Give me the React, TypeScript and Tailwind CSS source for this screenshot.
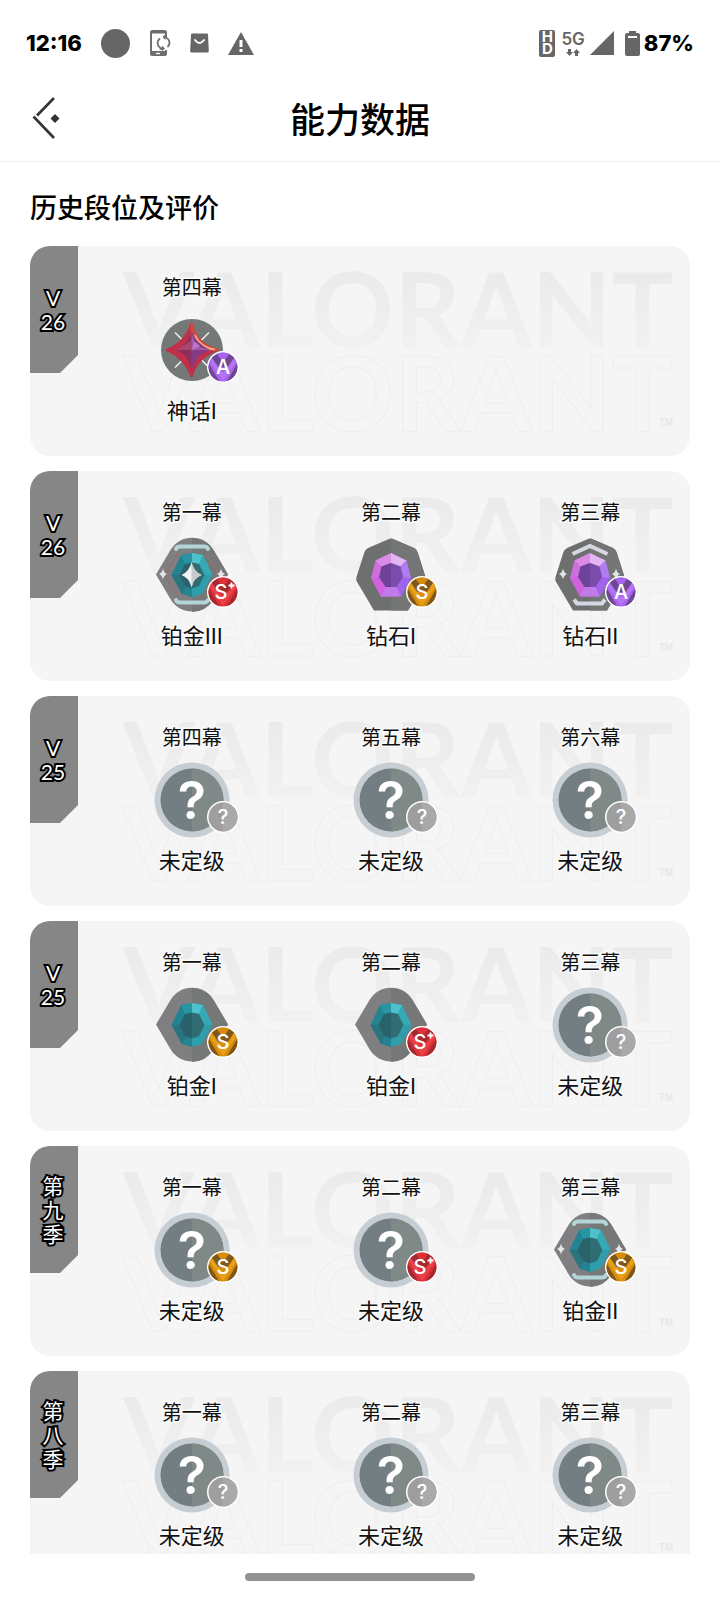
import type { ReactNode } from "react";

type Rank = "unranked" | "plat1" | "plat2" | "plat3" | "dia1" | "dia2" | "immortal";
type Grade = "A" | "S" | "S+" | "?";

interface Act {
  act: string;
  rank: Rank;
  grade: Grade;
}

interface Season {
  id: string;
  label: string[];
  acts: Act[];
}

const RANK_NAMES: Record<Rank, [string, string]> = {
  unranked: ["未定级", ""],
  plat1: ["铂金", "I"],
  plat2: ["铂金", "II"],
  plat3: ["铂金", "III"],
  dia1: ["钻石", "I"],
  dia2: ["钻石", "II"],
  immortal: ["神话", "I"],
};

const SEASONS: Season[] = [
  {
    id: "v26-2",
    label: ["V", "26"],
    acts: [{ act: "第四幕", rank: "immortal", grade: "A" }],
  },
  {
    id: "v26-1",
    label: ["V", "26"],
    acts: [
      { act: "第一幕", rank: "plat3", grade: "S+" },
      { act: "第二幕", rank: "dia1", grade: "S" },
      { act: "第三幕", rank: "dia2", grade: "A" },
    ],
  },
  {
    id: "v25-2",
    label: ["V", "25"],
    acts: [
      { act: "第四幕", rank: "unranked", grade: "?" },
      { act: "第五幕", rank: "unranked", grade: "?" },
      { act: "第六幕", rank: "unranked", grade: "?" },
    ],
  },
  {
    id: "v25-1",
    label: ["V", "25"],
    acts: [
      { act: "第一幕", rank: "plat1", grade: "S" },
      { act: "第二幕", rank: "plat1", grade: "S+" },
      { act: "第三幕", rank: "unranked", grade: "?" },
    ],
  },
  {
    id: "s9",
    label: ["第", "九", "季"],
    acts: [
      { act: "第一幕", rank: "unranked", grade: "S" },
      { act: "第二幕", rank: "unranked", grade: "S+" },
      { act: "第三幕", rank: "plat2", grade: "S" },
    ],
  },
  {
    id: "s8",
    label: ["第", "八", "季"],
    acts: [
      { act: "第一幕", rank: "unranked", grade: "?" },
      { act: "第二幕", rank: "unranked", grade: "?" },
      { act: "第三幕", rank: "unranked", grade: "?" },
    ],
  },
];

const GRADE_COLORS: Record<Grade, { base: string; dark: string; light: string }> = {
  A: { base: "#a763ee", dark: "#6d478f", light: "#bb7cf8" },
  S: { base: "#d88c0c", dark: "#7d571b", light: "#f0a81c" },
  "S+": { base: "#dd3038", dark: "#a52a30", light: "#f04a50" },
  "?": { base: "#9e9e9e", dark: "#9e9e9e", light: "#a9a9a9" },
};

function GradeBadge({ grade }: { grade: Grade }) {
  const c = GRADE_COLORS[grade];
  return (
    <svg viewBox="0 0 32 32" className="absolute top-[39px] left-[53px] size-8">
      <circle cx="16" cy="16" r="16" fill="#fff" />
      <circle cx="16" cy="16" r="14.500" fill={c.base} />
      {grade !== "?" && (
        <>
          <path d="M3.500 9l12.500 19-3 2.200A14.500 14.500 0 0 1 3.500 9Z" fill={c.base} />
          <path d="M2 13l10 17A14.500 14.500 0 0 1 2 13ZM30 13L20 30A14.500 14.500 0 0 0 30 13Z" fill={c.dark} />
          <path d="M5 6.500L10 3l6 8 6-8 5 3.500-5 9.500H10Z" fill={c.dark} />
          <path d="M10 3q6-3 12 0l-6 8Z" fill={c.base} />
          <path d="M5 7l11 15L27 7l2 4-13 19L3 11Z" fill={c.light} opacity="0.7" />
        </>
      )}
      {grade === "?" && <path d="M16 1.500a14.500 14.500 0 0 1 0 29Z" fill={c.light} />}
      <text
        x={grade === "S+" ? 14 : 16}
        y="23"
        textAnchor="middle"
        fill="#fff"
        className="font-[Inter,sans-serif] text-[20px] font-medium"
      >
        {grade === "S+" ? "S" : grade}
      </text>
      {grade === "S+" && <path d="M24.500 6.500v6M21.500 9.500h6" stroke="#fff" strokeWidth="1.800" />}
    </svg>
  );
}

function Sparkle({ cx, cy }: { cx: number; cy: number }) {
  return (
    <path
      transform={`translate(${cx} ${cy})`}
      d="M0-5.500Q1-1 4 0 1 1 0 5.500-1 1-4 0-1-1 0-5.500Z"
      fill="#e4e6ea"
    />
  );
}

function Unranked() {
  return (
    <>
      <circle cx="38" cy="38" r="37.500" fill="#c6cdd3" />
      <circle cx="38" cy="38" r="31.500" fill="#737e82" />
      <path d="M38 6.500a31.500 31.500 0 0 1 0 63Z" fill="#7f8987" />
      <text
        x="38"
        y="57"
        textAnchor="middle"
        fill="#fff"
        className="font-[Inter,sans-serif] text-[52px] font-semibold"
      >
        ?
      </text>
    </>
  );
}

function Platinum({ tier }: { tier: 1 | 2 | 3 }) {
  return (
    <>
      <path
        d="M2 37.500L16.500 13A25 25 0 0 1 59.500 13L74 37.500 59 63A25 25 0 0 1 17 63Z"
        fill="#7f7e80"
      />
      <path d="M38 1A25 25 0 0 1 59.500 13L74 37.500 59 63A25 25 0 0 1 38 75Z" fill="#767877" />
      {tier > 1 && (
        <path
          d="M22 12q1-2.500 4-2.500h24q3 0 4 2.500M22 63q1 2.500 4 2.500h24q3 0 4-2.500"
          fill="none"
          stroke="#b4d5d8"
          strokeWidth="4"
          strokeLinecap="round"
        />
      )}
      {tier === 3 && (
        <path
          d="M24 16L11 37.500 24 59M52 16l13 21.500L52 59"
          fill="none"
          stroke="#8d7571"
          strokeWidth="1.500"
        />
      )}
      {tier > 1 && (
        <>
          <Sparkle cx={9} cy={37} />
          <Sparkle cx={67} cy={37} />
        </>
      )}
      <path d="M17.500 38L27 18l11-2v44l-10-3Z" fill="#238390" />
      <path d="M58.500 38L49 18l-11-2v44l10-3Z" fill="#2f9dab" />
      <path d="M27 18l11-2v10l-7 1Z" fill="#2a95a2" />
      <path d="M38 16l11 2-4 9-7-1Z" fill="#4fc1ca" />
      <path d="M49 18l9.500 20H50l-5-11Z" fill="#35a9b6" />
      <path d="M17.500 38H26l6 11-4 8Z" fill="#2a7480" />
      <path d="M25.500 38L31 27l7-1.500v26L31 49Z" fill="#2a626b" />
      <path d="M50.500 38L45 27l-7-1.500v26l7-2.500Z" fill="#2f6d72" />
      {tier === 3 && (
        <>
          <path d="M37.500 25q2 9.500 10 13-8 3-10 12.500-2-9.500-10-12.500 8-3.500 10-13Z" fill="#f2f2f4" />
          <path d="M37.500 25q2 9.500 10 13-8 3-10 12.500Z" fill="#c9c9cf" />
        </>
      )}
    </>
  );
}

function Diamond({ tier }: { tier: 1 | 2 }) {
  return (
    <>
      <path
        d="M36.500 1.800L15 11q-3 1.500-3.700 4.500L3.500 40q-.8 2.500.6 5L21 73.500h34L71.900 45q1.400-2.500.6-5l-7.800-24.500Q64 12.500 61 11L39.500 1.800q-1.500-.6-3 0Z"
        fill="#6e706f"
      />
      <path d="M38 1.400l1.500.4L61 11q3 1.500 3.700 4.500L72.500 40q.8 2.500-.6 5L55 73.500H38Z" fill="#747675" />
      {tier === 2 && (
        <>
          <path
            d="M20.500 17L38 9l17.500 8M22 62.500l3 4h25l3-4"
            fill="none"
            stroke="#d7d7e4"
            strokeWidth="4"
          />
          <Sparkle cx={11} cy={37} />
          <Sparkle cx={64} cy={37} />
        </>
      )}
      <path d="M38 16L22.500 23.500 18 41l10 18.500h10Z" fill="#cf6fdd" />
      <path d="M38 16l15.500 7.500L58 41 48 59.500H38Z" fill="#a263ec" />
      <path d="M38 16l-15.500 7.500 6 6L38 26Z" fill="#d98be6" />
      <path d="M38 16l15.500 7.500-6 6L38 26Z" fill="#e3b6f3" />
      <path d="M53.500 23.500L58 41l-8-1-2.500-10.500Z" fill="#b07cf0" />
      <path d="M18 41l8-1 6.500 10-4.500 9.500Z" fill="#d161dc" />
      <path d="M28 59.500l4.500-9.500h11l4.500 9.500Z" fill="#c07ae9" />
      <path d="M38 26l-9.500 3.500L26 40l6.500 10H38Z" fill="#6d4399" />
      <path d="M38 26l9.500 3.500L50 40l-6.500 10H38Z" fill="#7c4cab" />
    </>
  );
}

function Immortal() {
  return (
    <>
      <circle cx="38" cy="38" r="31" fill="#747877" />
      <path
        d="M21 20.500l9 9M55 20.500l-9 9M21 55.500l9-9M55 55.500l-9-9"
        stroke="#f0eef0"
        strokeWidth="1.500"
      />
      <path
        d="M37.500 11.500Q42 32 63.500 38 43 45 37.500 64.500 31 46 12.500 38 31 31 37.500 11.500Z"
        fill="#c22f48"
        stroke="#c22f48"
        strokeWidth="2"
        strokeLinejoin="round"
      />
      <path d="M37.500 11.500Q42 32 63.500 38H37.500Z" fill="#d4483f" stroke="#d4483f" strokeWidth="2" strokeLinejoin="round" />
      <path d="M41 23q5 12 20 14.500-12-.5-17-5Z" fill="#f2aa7e" stroke="#f2aa7e" strokeWidth="1.500" />
      <path d="M37.500 19q-3 13-15.500 19 13 5 15.500 21Z" fill="#8c2f5c" />
      <path d="M37.500 28l-5.500 4-10 6h15.500Z" fill="#a8466f" />
      <path d="M37.500 19q4 12 18.500 19-15 5-18.500 21Z" fill="#853a85" />
      <path d="M37.500 20l3 10 6 5 9 3h-18Z" fill="#a558aa" />
      <path d="M40 29l6 5-8 4Z" fill="#bd76c2" />
    </>
  );
}

const RANK_ICONS: Record<Rank, ReactNode> = {
  unranked: <Unranked />,
  plat1: <Platinum tier={1} />,
  plat2: <Platinum tier={2} />,
  plat3: <Platinum tier={3} />,
  dia1: <Diamond tier={1} />,
  dia2: <Diamond tier={2} />,
  immortal: <Immortal />,
};

function StatusBar() {
  return (
    <div className="flex h-[86px] shrink-0 items-center justify-between px-[26px] font-[Inter,sans-serif] text-[22px] font-extrabold text-black">
      <div className="flex items-center gap-[19px]">
        <span>12:16</span>
        <svg viewBox="0 0 29 29" className="size-[29px]">
          <circle cx="14.500" cy="14.500" r="14.500" fill="#666" />
        </svg>
        <svg viewBox="0 0 22 28" className="h-7 w-[22px]" fill="none" stroke="#6f6f6f">
          <path
            d="M17 7V3.500Q17 2 15.500 2h-12Q2 2 2 3.500v21Q2 26 3.500 26h12q1.500 0 1.500-1.500V21"
            strokeWidth="2"
          />
          <path d="M2 22.500h15V26H2ZM3 2h13v2H3Z" fill="#6f6f6f" strokeWidth="1" />
          <path d="M7 24.500h4" stroke="#fff" strokeWidth="1.300" />
          <path
            d="M12.500 19.300A5.500 5.500 0 0 1 11 9.500M16.500 8.500A5.500 5.500 0 0 1 18.500 18M13.800 19.900l-3.200.3M15 8l3-.8"
            strokeWidth="1.700"
          />
          <path d="M16.500 5l-3 3.200 3 2.800ZM13 16.500l3 3-3 2.800Z" fill="#6f6f6f" stroke="none" />
        </svg>
        <svg viewBox="0 0 19 20" className="h-5 w-[19px]">
          <path d="M2 .5h15q1 0 1 1l.8 16.500q0 1.500-1.300 1.500h-16Q.2 19.500.2 18L1 1.500q0-1 1-1Z" fill="#666" />
          <path d="M5 7q4.500 6 9 0" fill="none" stroke="#fff" strokeWidth="2" strokeLinecap="round" />
        </svg>
        <svg viewBox="0 0 26 23" className="h-[23px] w-[26px]">
          <path d="M13 0l13 23H0Z" fill="#666" />
          <path d="M13 8v7M13 17v3" stroke="#fff" strokeWidth="3" />
        </svg>
      </div>
      <div className="flex items-center">
        <div className="flex h-[27px] w-4 flex-col items-center justify-center rounded-xs bg-[#666] text-[15px] leading-[12px] font-bold text-white">
          <span>H</span>
          <span>D</span>
        </div>
        <div className="ml-1.5 flex flex-col items-center text-[#666]">
          <span className="text-[17px] leading-[16px] font-semibold">5G</span>
          <svg viewBox="0 0 14 7" className="mt-0.5 h-[7px] w-3.5" fill="#666">
            <path d="M2 0h3v3h2L3.500 7 0 3h2ZM9 7h3V4h2l-3.500-4L7 4h2Z" />
          </svg>
        </div>
        <svg viewBox="0 0 24 24" className="ml-[5px] size-6" fill="#666">
          <path d="M24 0v24H0Z" />
        </svg>
        <svg viewBox="0 0 15 25" className="ml-[11px] h-[25px] w-[15px]">
          <path d="M4 0h7v2h2q2 0 2 2v19q0 2-2 2H2q-2 0-2-2V4q0-2 2-2h2Z" fill="#666" />
          <path d="M3 6h9" stroke="#fff" strokeWidth="2" />
        </svg>
        <span className="ml-1">87%</span>
      </div>
    </div>
  );
}

function Watermark() {
  return (
    <div
      aria-hidden="true"
      className="pointer-events-none absolute top-[19px] left-[93px] font-[Lato,sans-serif] text-[103px] leading-[84px] font-bold whitespace-nowrap text-transparent select-none"
    >
      <div className="bg-linear-to-b from-[#eaeaea] to-[#f1f1f1] bg-clip-text">VALORANT</div>
      <div className="[-webkit-text-stroke:1px_#eeeeee]">VALORANT</div>
      <div className="absolute right-0 bottom-1 font-['Liberation_Sans',sans-serif] text-[10px] leading-3 text-[#e8e8e8]">
        TM
      </div>
    </div>
  );
}

function SeasonCard({ season }: { season: Season }) {
  return (
    <article className="relative flex h-[210px] shrink-0 overflow-hidden rounded-[20px] bg-[#f5f5f5]">
      <Watermark />
      <h3 className="relative flex h-[127px] w-12 shrink-0 flex-col items-center justify-center bg-[#868686] pr-0.5 font-[Lato,'Noto_Sans_CJK_SC',sans-serif] text-[21px] leading-6 text-white [-webkit-text-stroke:4px_#000] [clip-path:polygon(0_0,100%_0,100%_109px,30px_100%,0_100%)] [paint-order:stroke_fill]">
        {season.label.map((line) => (
          <span key={line}>{line}</span>
        ))}
      </h3>
      <ul className="relative ml-3.5 grid flex-1 grid-cols-3 pt-[26px]">
        {season.acts.map(({ act, rank, grade }) => (
          <li
            key={act}
            className="flex flex-col items-center text-[#111] [-webkit-text-stroke:3px_#fafafa] [paint-order:stroke_fill]"
          >
            <span className="text-xl leading-[30px]">{act}</span>
            <div className="relative mt-2.5 size-[76px] [-webkit-text-stroke:0]">
              <svg viewBox="0 0 76 76" className="size-full">
                {RANK_ICONS[rank]}
              </svg>
              <GradeBadge grade={grade} />
            </div>
            <span className="mt-[5px] text-[22px] leading-8">
              {RANK_NAMES[rank][0]}
              <span className="font-[Roboto,sans-serif]">{RANK_NAMES[rank][1]}</span>
            </span>
          </li>
        ))}
      </ul>
    </article>
  );
}

export default function App() {
  return (
    <div className="flex h-screen flex-col bg-white font-['Noto_Sans_CJK_SC',sans-serif]">
      <StatusBar />
      <header className="grid h-[76px] shrink-0 grid-cols-[1fr_auto_1fr] items-center border-b border-[#f0f0f0] px-[30px] pb-3">
        <button type="button" aria-label="返回" className="w-fit">
          <svg viewBox="0 0 32 44" className="h-11 w-8" fill="none" stroke="#333" strokeWidth="2.600">
            <path d="M24 2L7 19.500M3.500 20.500L24 42" />
            <path d="M25 18l4.500 4.500-4.500 4.500-4.500-4.500Z" fill="#333" stroke="none" />
          </svg>
        </button>
        <h1 className="text-[35px] leading-[50px] font-medium text-black">能力数据</h1>
      </header>
      <main className="flex min-h-0 flex-1 flex-col overflow-hidden px-[30px] pt-6">
        <h2 className="text-[27px] leading-[42px] font-medium text-black">历史段位及评价</h2>
        <div className="mt-[18px] flex flex-col gap-[15px]">
          {SEASONS.map((season) => (
            <SeasonCard key={season.id} season={season} />
          ))}
        </div>
      </main>
      <div className="flex h-[46px] shrink-0 items-center justify-center">
        <div className="h-2 w-[230px] rounded-full bg-[#929292]" />
      </div>
    </div>
  );
}
